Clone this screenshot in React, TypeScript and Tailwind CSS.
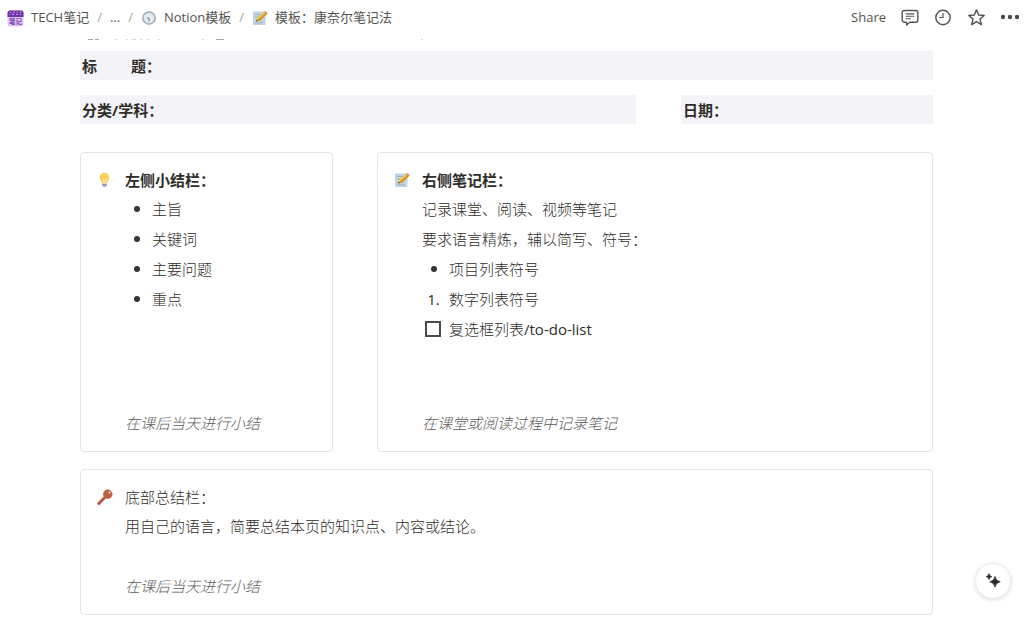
import type { ReactNode } from 'react';

function NotebookIcon() {
  return (
    <svg viewBox="0 0 17 17" className="size-[17px] shrink-0" aria-hidden="true">
      <rect x="0.5" y="0.5" width="16" height="16" rx="2.5" fill="#dccbf0" />
      <path d="M3 .5h11A2.5 2.5 0 0 1 16.500 3v4H.5V3A2.500 2.500 0 0 1 3 .5z" fill="#6b2fa6" />
      <path d="M2.500 2.300h2M6 2.300h2M9.500 2.300h1.500M12.500 2.300h2M2.500 4.500h1M5 4.500h2M9 4.500h2M12.500 4.500h1.500" stroke="#c9a8ea" strokeWidth="1" />
      <text x="8.5" y="14.300" textAnchor="middle" fontSize="6.500" fontWeight="700" fill="#7a3fb5">笔记</text>
    </svg>
  );
}

function ClockFaceIcon() {
  return (
    <svg viewBox="0 0 16 16" className="size-4 shrink-0" aria-hidden="true">
      <circle cx="8" cy="8" r="6.200" fill="#d6e3ec" stroke="#94a4b2" strokeWidth="1.300" />
      <circle cx="8" cy="8" r="4.600" fill="#e3edf3" />
      <path d="M8 11.500V8H5.800" fill="none" stroke="#6c7b88" strokeWidth="1" />
    </svg>
  );
}

function MemoIcon() {
  return (
    <svg viewBox="0 0 16 16" className="size-4 shrink-0" aria-hidden="true">
      <path d="M1 1.500h12.500v13.500H1z" fill="#c3d3e4" />
      <path d="M3 4.500h6M3 7h4M3 12.800h8" stroke="#9fb0c4" strokeWidth="0.900" />
      <path d="M4 11.500 5.200 7.800 12.200 1.800 14.800 4.300 8 10.700z" fill="#f0c63a" />
      <path d="M5.200 10.400 13.500 3.100 14.800 4.300 8 10.700z" fill="#c99422" />
      <path d="M12.200 1.800 13.300.9 15.800 3.300 14.800 4.300z" fill="#e5827c" />
      <path d="M4 11.500 4.600 9.400 6.400 11z" fill="#5b5442" />
    </svg>
  );
}

function BulbIcon() {
  return (
    <svg viewBox="0 0 16 16" className="size-4 shrink-0" aria-hidden="true">
      <path d="M7.500.8a4.800 4.800 0 0 1 4.800 4.800c0 2.300-1.700 3.200-2.200 5.600H4.900C4.400 8.800 2.700 7.900 2.700 5.600A4.800 4.800 0 0 1 7.500.8z" fill="#fbcf5c" />
      <path d="M6 6.200 7 11h1l1-4.800" fill="none" stroke="#fff0b8" strokeWidth="0.900" />
      <path d="M5.200 11.400h4.600v2.200L8.700 15H6.300l-1.100-1.400z" fill="#a9b0c6" />
      <path d="M5.200 12.700h4.600" stroke="#7d86a2" strokeWidth="0.700" />
    </svg>
  );
}

function KeyIcon() {
  return (
    <svg viewBox="0 0 16 16" className="size-4 shrink-0" aria-hidden="true">
      <path d="M8.200 6.400 9.800 8 3.600 14.300 2.900 15.400 1 15.600.4 14.800 1 13.500z" fill="#b9583c" stroke="#b9583c" strokeWidth="0.800" strokeLinejoin="round" />
      <circle cx="10.800" cy="5.300" r="4.700" fill="#bd6045" />
      <circle cx="12.600" cy="3.400" r="1" fill="#fff" />
    </svg>
  );
}

function CommentIcon() {
  return (
    <svg viewBox="0 0 18 18" className="size-[18px]" fill="none" stroke="#55534e" strokeWidth="1.400" aria-hidden="true">
      <path d="M3.200 1.500h11.600a2 2 0 0 1 2 2v7.700a2 2 0 0 1-2 2H8.800L5.600 16v-2.800H3.200a2 2 0 0 1-2-2V3.500a2 2 0 0 1 2-2z" strokeLinejoin="round" />
      <path d="M4.800 4.900h8.400M4.800 7.300h8.400M4.800 9.700h5" strokeWidth="1.100" />
    </svg>
  );
}

function HistoryIcon() {
  return (
    <svg viewBox="0 0 18 18" className="size-[18px]" fill="none" stroke="#55534e" strokeWidth="1.400" aria-hidden="true">
      <circle cx="9" cy="8.500" r="7.200" />
      <path d="M9 4V8.500H5.200" strokeWidth="1.200" />
    </svg>
  );
}

function StarIcon() {
  return (
    <svg viewBox="0 0 18 18" className="size-[18px]" fill="none" stroke="#55534e" strokeWidth="1.400" strokeLinejoin="round" aria-hidden="true">
      <path d="M9.500.900 11.700 6 17.200 6.500 13 10.100 14.300 15.600 9.500 12.700 4.700 15.600 6 10.100 1.800 6.500 7.300 6z" />
    </svg>
  );
}

function DotsIcon() {
  return (
    <svg viewBox="0 0 20 18" className="h-[18px] w-5" fill="#4b4945" aria-hidden="true">
      <circle cx="3" cy="8" r="2.200" />
      <circle cx="10" cy="8" r="2.200" />
      <circle cx="17" cy="8" r="2.200" />
    </svg>
  );
}

function SparklesIcon() {
  return (
    <svg viewBox="0 0 18 18" className="size-[18px]" fill="#2b2926" aria-hidden="true">
      <path d="M11 4.500Q11.700 9 16.200 9.800 11.700 10.600 11 15.100 10.300 10.600 5.800 9.800 10.300 9 11 4.500z" stroke="#2b2926" strokeWidth="0.800" />
      <path d="M5 1.500Q5.400 4.100 8 4.600 5.400 5.100 5 7.700 4.600 5.100 2 4.600 4.600 4.100 5 1.500z" stroke="#2b2926" strokeWidth="0.600" />
    </svg>
  );
}

// lower edge of the line that has scrolled under the top bar
function ScrolledLine() {
  return (
    <svg viewBox="0 0 344 3" className="h-[3px] w-[344px]" fill="none" stroke="#a5a4a0" aria-hidden="true">
      <path d="M8 1.500h5M15 1.500h4M136 1.500h8" />
      <path d="M35 1.500h3M46 1.500h2M52 1.500h4M60 1.500h3M67 1.500h3M78 1.500h2M122 1.500h2M341 1.500h2" stroke="#dddcda" />
    </svg>
  );
}

const Slash = () => <span className="text-[#a3a29f]">/</span>;

function Crumb({ icon, children }: { icon?: ReactNode; children: ReactNode }) {
  return (
    <a href="#" className="flex items-center gap-[7px]">
      {icon}
      <span>{children}</span>
    </a>
  );
}

function Field({ children }: { children: ReactNode }) {
  return <div className="flex h-[29px] items-center gap-[34px] bg-[#f4f3f8] px-0.5 pt-px font-bold">{children}</div>;
}

function Callout({ icon, children }: { icon: ReactNode; children: ReactNode }) {
  return (
    <section className="flex gap-3 rounded border border-[#e4e4e3] px-4 py-[13px]">
      <div className="flex h-7 items-center">{icon}</div>
      <div className="flex flex-1 flex-col leading-[30px]">{children}</div>
    </section>
  );
}

function Item({ marker, children }: { marker?: ReactNode; children: ReactNode }) {
  return (
    <li className="flex items-center gap-1">
      <span className="flex w-[23px] justify-center font-normal">
        {marker ?? <span className="size-1.5 rounded-full bg-[#37352f]" />}
      </span>
      <span>{children}</span>
    </li>
  );
}

const summaryItems = ['主旨', '关键词', '主要问题', '重点'];

export default function App() {
  return (
    <div className="min-h-screen bg-white font-['Open_Sans','Noto_Sans_CJK_SC',sans-serif] text-[15px] font-light text-[#2f2d28]">
      <header className="flex h-9 items-center justify-between pr-1 pl-[7px] text-[13px] font-normal text-[#55534e]">
        <nav className="flex items-center gap-2">
          <Crumb icon={<NotebookIcon />}>TECH笔记</Crumb>
          <Slash />
          <Crumb>...</Crumb>
          <Slash />
          <Crumb icon={<ClockFaceIcon />}>Notion模板</Crumb>
          <Slash />
          <Crumb icon={<MemoIcon />}>模板：康奈尔笔记法</Crumb>
        </nav>
        <div className="flex items-center gap-[15px]">
          <button type="button">Share</button>
          <button type="button" aria-label="Comments"><CommentIcon /></button>
          <button type="button" aria-label="Updates"><HistoryIcon /></button>
          <button type="button" aria-label="Favorite"><StarIcon /></button>
          <button type="button" aria-label="More"><DotsIcon /></button>
        </div>
      </header>

      <main className="pt-0.5 pr-[91px] pb-1 pl-20">
        <ScrolledLine />
        <div className="mt-2.5">
          <Field>
            <span>标</span>
            <span>题：</span>
          </Field>
          <div className="mt-[15px] grid grid-cols-[556fr_252fr] gap-[45px]">
            <Field>分类/学科：</Field>
            <Field>日期：</Field>
          </div>
        </div>

        <div className="mt-7 grid grid-cols-[253fr_556fr] gap-11">
          <Callout icon={<BulbIcon />}>
            <h2 className="leading-7 font-bold">左侧小结栏：</h2>
            <ul>
              {summaryItems.map((item) => (
                <Item key={item}>{item}</Item>
              ))}
            </ul>
            <p className="mt-auto text-[#5c5b58] italic">在课后当天进行小结</p>
          </Callout>

          <Callout icon={<MemoIcon />}>
            <h2 className="leading-7 font-bold">右侧笔记栏：</h2>
            <p>记录课堂、阅读、视频等笔记</p>
            <p>要求语言精炼，辅以简写、符号：</p>
            <ul>
              <Item>项目列表符号</Item>
            </ul>
            <ol>
              <Item marker="1.">数字列表符号</Item>
            </ol>
            <label className="flex items-center gap-2 pl-[3px]">
              <input type="checkbox" className="size-4 appearance-none border-2 border-[#4b4945]" />
              <span>
                复选框列表<span className="font-normal">/to-do-list</span>
              </span>
            </label>
            <p className="mt-16 text-[#5c5b58] italic">在课堂或阅读过程中记录笔记</p>
          </Callout>
        </div>

        <div className="mt-[17px]">
          <Callout icon={<KeyIcon />}>
            <h2 className="leading-7">底部总结栏：</h2>
            <p>用自己的语言，简要总结本页的知识点、内容或结论。</p>
            <p className="mt-[30px] text-[#5c5b58] italic">在课后当天进行小结</p>
          </Callout>
        </div>
      </main>

      <button
        type="button"
        aria-label="Ask AI"
        className="fixed right-[13px] bottom-[21px] flex size-9 items-center justify-center rounded-full border border-[#ececeb] bg-white shadow-[0_1px_4px_rgba(0,0,0,0.14)]"
      >
        <SparklesIcon />
      </button>
    </div>
  );
}
